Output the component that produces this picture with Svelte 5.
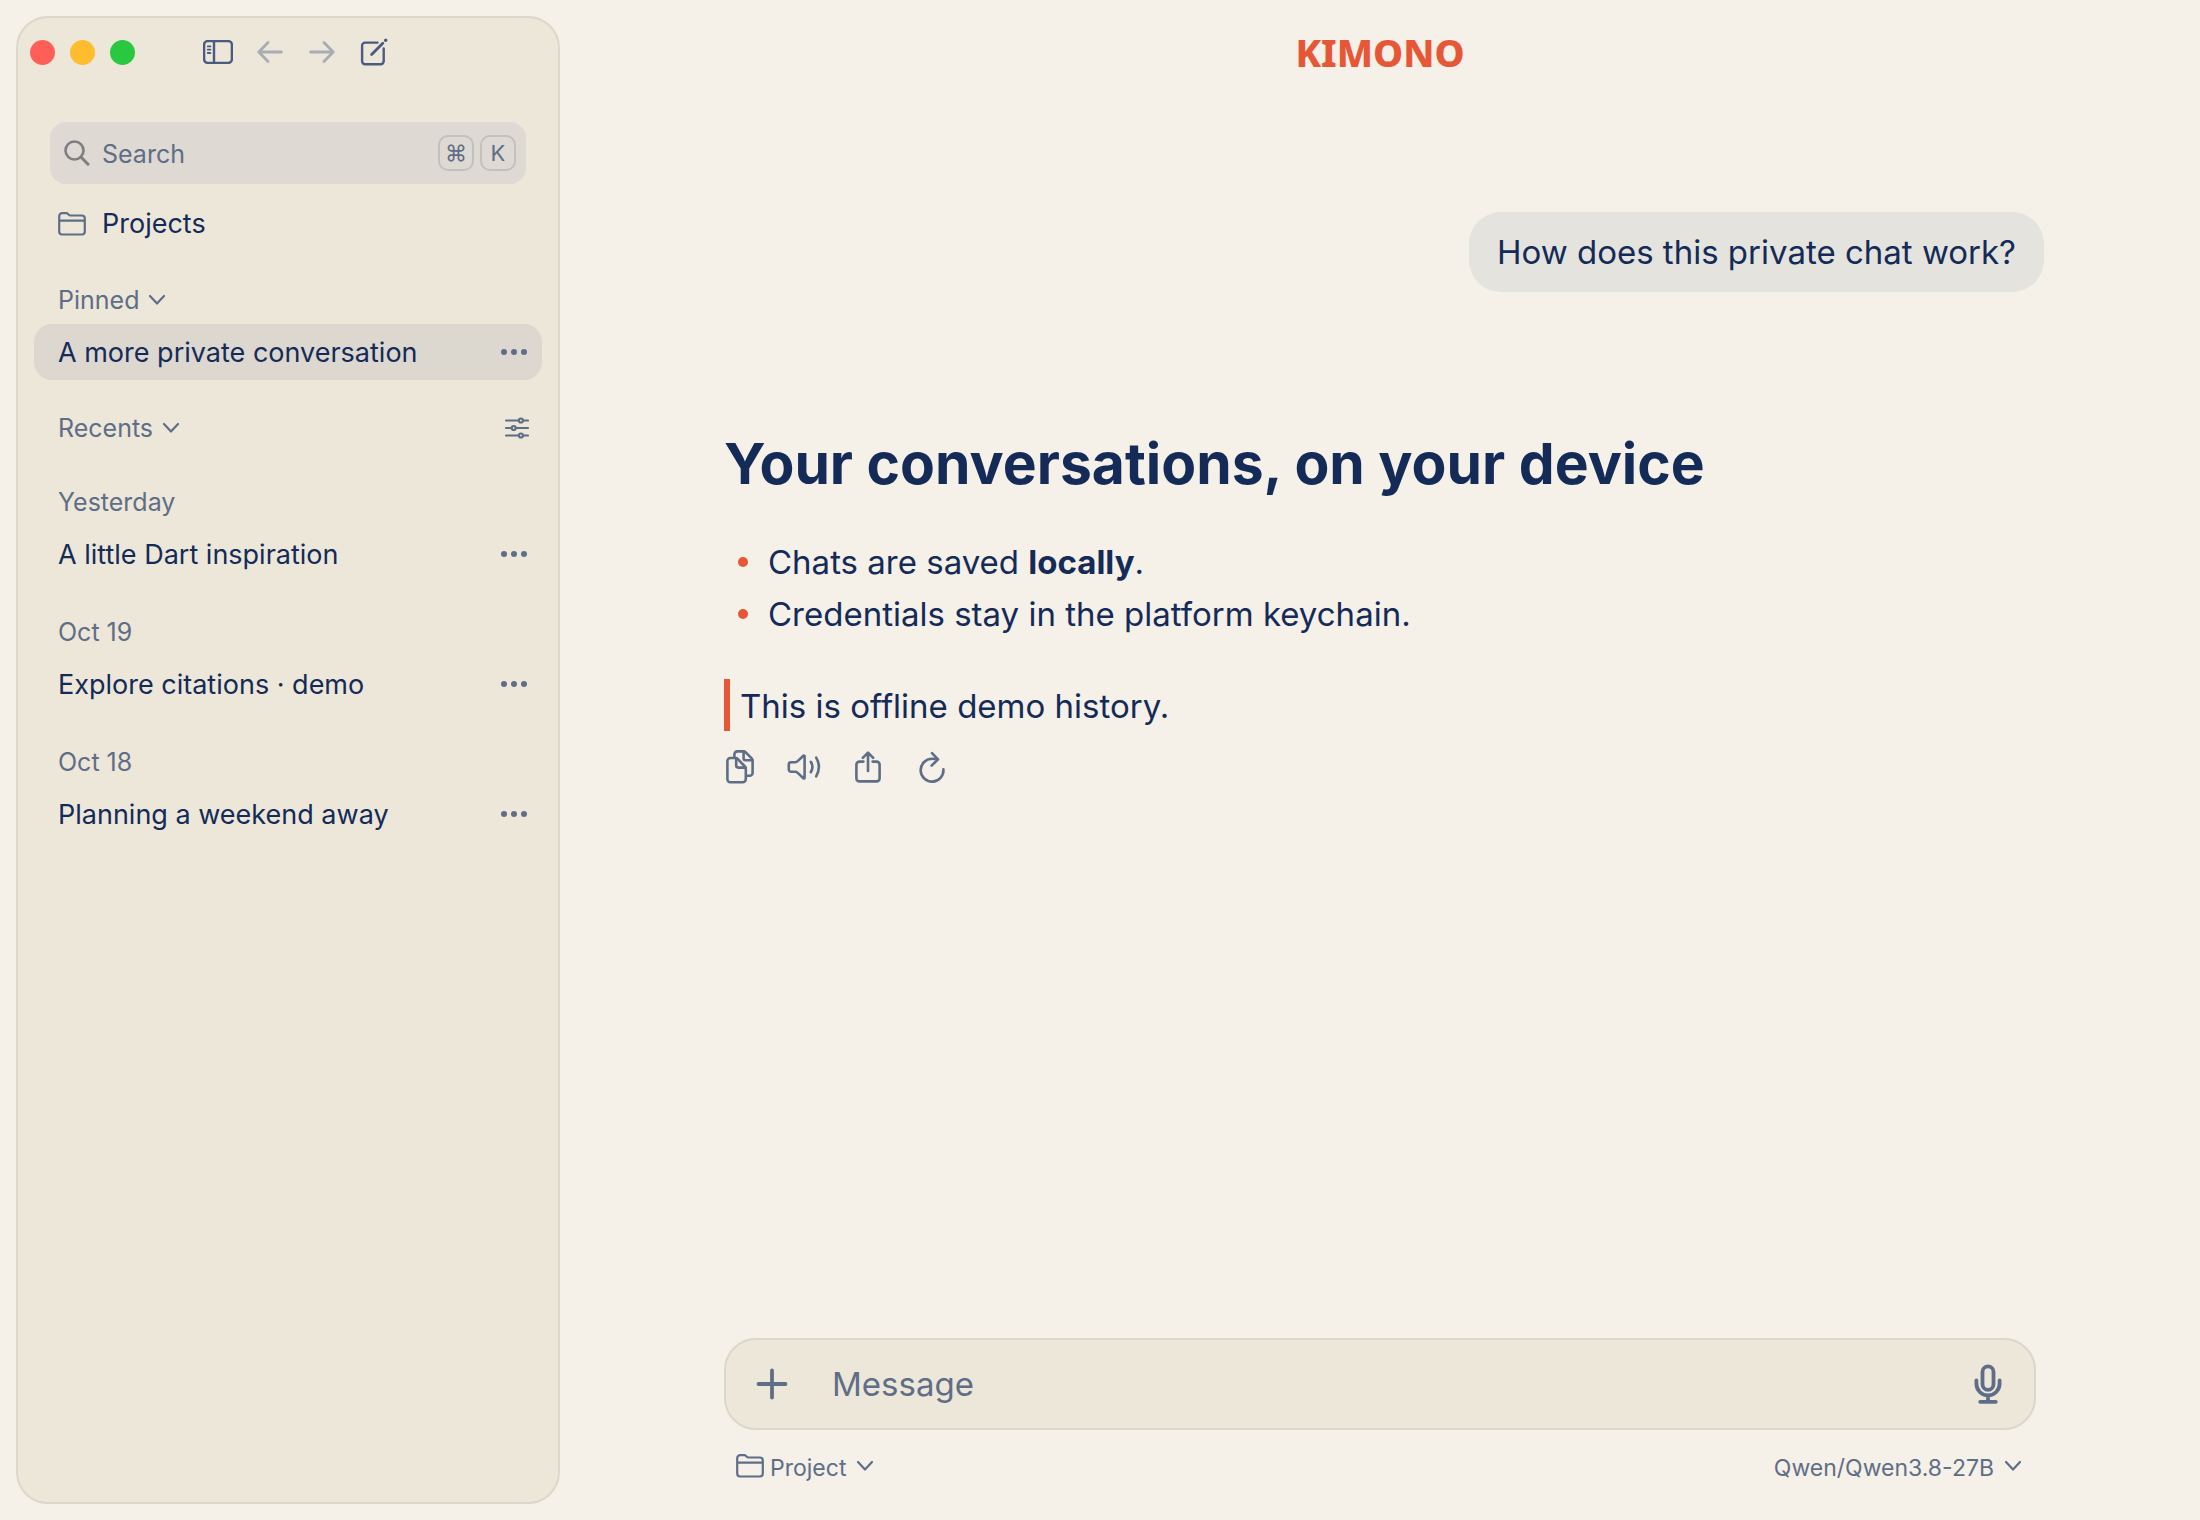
<script lang="ts">
    interface Chat {
        title: string;
        date?: string;
    }

    const pinned: Chat[] = [{ title: 'A more private conversation' }];

    const recents: Chat[] = [
        { date: 'Yesterday', title: 'A little Dart inspiration' },
        { date: 'Oct 19', title: 'Explore citations · demo' },
        { date: 'Oct 18', title: 'Planning a weekend away' }
    ];

    let selected = $state('A more private conversation');
    let pinnedOpen = $state(true);
    let recentsOpen = $state(true);
    let query = $state('');
    let message = $state('');
</script>

{#snippet chevron()}
    <svg class="chevron" width="18" height="12" viewBox="0 0 18 12" aria-hidden="true">
        <path d="M2 2l7 7.5L16 2" />
    </svg>
{/snippet}

{#snippet folder()}
    <svg width="28" height="24" viewBox="0 0 28 24" aria-hidden="true">
        <path d="M1.2 19.5V4.2a3 3 0 0 1 3-3h4.2c1.6 0 2.2 2.3 4 2.3h11.4a3 3 0 0 1 3 3v13a3 3 0 0 1-3 3H4.2a3 3 0 0 1-3-3zM1.2 8.6h25.6" />
    </svg>
{/snippet}

{#snippet chatRow(chat: Chat)}
    <div class="row" class:selected={chat.title === selected}>
        <button class="title" onclick={() => (selected = chat.title)}>{chat.title}</button>
        <button class="more" aria-label="More options for {chat.title}">
            <svg width="28" height="8" viewBox="0 0 28 8" aria-hidden="true">
                <circle cx="4" cy="4" r="3" />
                <circle cx="14" cy="4" r="3" />
                <circle cx="24" cy="4" r="3" />
            </svg>
        </button>
    </div>
{/snippet}

<div class="app">
    <aside class="sidebar">
        <div class="toolbar">
            <div class="lights">
                <button class="light red" aria-label="Close"></button>
                <button class="light yellow" aria-label="Minimize"></button>
                <button class="light green" aria-label="Zoom"></button>
            </div>
            <nav class="tools" aria-label="Window">
                <button class="tool" aria-label="Toggle sidebar">
                    <svg width="30" height="24" viewBox="0 0 30 24" aria-hidden="true">
                        <rect x="1.1" y="1.1" width="27.8" height="21.8" rx="3.6" />
                        <path d="M11 1v22" />
                        <path d="M4.8 6.4h2.6M4.8 9.7h2.6M4.8 13h2.6" stroke-width="1.8" />
                    </svg>
                </button>
                <button class="tool" aria-label="Back" disabled>
                    <svg width="26" height="22" viewBox="0 0 26 22" aria-hidden="true">
                        <path d="M11 1.6L1.8 11l9.2 9.4M1.8 11h22.6" />
                    </svg>
                </button>
                <button class="tool" aria-label="Forward" disabled>
                    <svg width="26" height="22" viewBox="0 0 26 22" aria-hidden="true">
                        <path d="M15 1.6l9.2 9.4-9.2 9.4M24.2 11H1.6" />
                    </svg>
                </button>
                <button class="tool" aria-label="New chat">
                    <svg width="28" height="28" viewBox="0 0 28 28" aria-hidden="true">
                        <path d="M17.5 4.6H5.1a3 3 0 0 0-3 3v15.7a3 3 0 0 0 3 3h15.6a3 3 0 0 0 3-3V10.4" />
                        <path d="M11.6 16.4L22.8 5.2" stroke-width="2.8" />
                        <path d="M25.6 2.4l.2-.2" stroke-width="3.2" />
                    </svg>
                </button>
            </nav>
        </div>

        <label class="search">
            <svg width="26" height="26" viewBox="0 0 26 26" aria-hidden="true">
                <circle cx="10.5" cy="10.5" r="9" />
                <path d="M17.2 17.2l6.8 7" stroke-width="3" />
            </svg>
            <input type="text" placeholder="Search" aria-label="Search" bind:value={query} />
            <kbd>⌘</kbd>
            <kbd>K</kbd>
        </label>

        <a class="projects" href="#projects">
            {@render folder()}
            Projects
        </a>

        <section class="group">
            <div class="group-head">
                <button onclick={() => (pinnedOpen = !pinnedOpen)}>Pinned {@render chevron()}</button>
            </div>
            {#if pinnedOpen}
                {#each pinned as chat (chat.title)}
                    {@render chatRow(chat)}
                {/each}
            {/if}
        </section>

        <section class="group">
            <div class="group-head">
                <button onclick={() => (recentsOpen = !recentsOpen)}>Recents {@render chevron()}</button>
                <button class="filter" aria-label="Filter recents">
                    <svg width="24" height="22" viewBox="0 0 24 22" aria-hidden="true">
                        <path d="M1 3.5h12.6M18.2 3.5H23M1 11h5.4M11 11h12M1 18.5h12.6M18.2 18.5H23" />
                        <circle cx="15.9" cy="3.5" r="2" />
                        <circle cx="8.7" cy="11" r="2" />
                        <circle cx="15.9" cy="18.5" r="2" />
                    </svg>
                </button>
            </div>
            {#if recentsOpen}
                {#each recents as chat (chat.title)}
                    <div class="day">
                        <h2>{chat.date}</h2>
                        {@render chatRow(chat)}
                    </div>
                {/each}
            {/if}
        </section>
    </aside>

    <main>
        <header>KIMONO</header>

        <div class="thread">
            <p class="bubble">How does this private chat work?</p>

            <article class="answer">
                <h1>Your conversations, on your device</h1>
                <ul>
                    <li>Chats are saved <strong>locally</strong>.</li>
                    <li>Credentials stay in the platform keychain.</li>
                </ul>
                <blockquote>This is offline demo history.</blockquote>
            </article>

            <div class="actions">
                <button aria-label="Copy">
                    <svg width="28" height="34" viewBox="0 0 28 34" aria-hidden="true">
                        <path d="M8.4 7.6V4.4a3 3 0 0 1 3-3h6.2c.8 0 1.5.3 2.1.9l6 6.1c.6.6.9 1.3.9 2.1v12.3a3 3 0 0 1-3 3h-2.2" />
                        <path d="M17.6 1.8v6.4a2 2 0 0 0 2 2h6.6" />
                        <path d="M4.4 8h5.2c.8 0 1.5.3 2.1.9l7.2 7.6c.6.6.9 1.3.9 2.1v10.6a3 3 0 0 1-3 3H4.4a3 3 0 0 1-3-3V11a3 3 0 0 1 3-3z" />
                        <path d="M10.2 8.4v7.2a2 2 0 0 0 2 2h7.2" />
                    </svg>
                </button>
                <button aria-label="Read aloud">
                    <svg width="34" height="28" viewBox="0 0 34 28" aria-hidden="true">
                        <path d="M4 9.2h4.4a3 3 0 0 0 2-.8l6-5.7c.5-.5 1.2-.1 1.2.6v21.4c0 .7-.7 1.1-1.2.6l-6-5.7a3 3 0 0 0-2-.8H4a2.2 2.2 0 0 1-2.2-2.2v-5.2A2.2 2.2 0 0 1 4 9.2z" />
                        <path d="M23.8 8.8a9.8 9.8 0 0 1 0 10.4M29.2 4.6a19 19 0 0 1 0 18.8" />
                    </svg>
                </button>
                <button aria-label="Share">
                    <svg width="26" height="32" viewBox="0 0 26 32" aria-hidden="true">
                        <path d="M8.4 10.6H4.4a3 3 0 0 0-3 3v13.8a3 3 0 0 0 3 3h17.2a3 3 0 0 0 3-3V13.6a3 3 0 0 0-3-3h-4" />
                        <path d="M13 20V2M7.8 6.8L13 1.6l5.2 5.2" />
                    </svg>
                </button>
                <button aria-label="Regenerate">
                    <svg width="28" height="32" viewBox="0 0 28 32" aria-hidden="true">
                        <path d="M25.4 18.4A11.4 11.4 0 1 1 14 7.8c2 0 3.8.2 5.6.6" />
                        <path d="M14 2.2l6 6.2-6.4 6.2" />
                    </svg>
                </button>
            </div>
        </div>

        <form class="composer" onsubmit={(e) => e.preventDefault()}>
            <div class="field">
                <button type="button" aria-label="Add attachment">
                    <svg class="bold" width="32" height="32" viewBox="0 0 32 32" aria-hidden="true">
                        <path d="M16 2.5v27M2.5 16h27" />
                    </svg>
                </button>
                <input type="text" placeholder="Message" aria-label="Message" bind:value={message} />
                <button type="button" aria-label="Dictate">
                    <svg class="bold" width="28" height="40" viewBox="0 0 28 40" aria-hidden="true">
                        <rect x="8.5" y="2.4" width="11" height="23.4" rx="5.5" />
                        <path d="M2.4 16.5v3.3a11.6 11.6 0 0 0 23.2 0v-3.3M14 31.6v5.8M6.2 37.8h15.6" />
                    </svg>
                </button>
            </div>
            <div class="options">
                <button type="button">{@render folder()} Project {@render chevron()}</button>
                <button type="button">Qwen/Qwen3.8-27B {@render chevron()}</button>
            </div>
        </form>
    </main>
</div>

<style>
    :global(body) {
        margin: 0;
        background: #f5f0e8;
    }

    .app {
        --navy: #142b58;
        --slate: #5f6e87;
        --coral: #e65737;
        --sand: #ede7d9;
        --line: #dad7cc;
        display: flex;
        min-height: 100vh;
        box-sizing: border-box;
        padding: 16px 0 16px 16px;
        background: #f5f0e8;
        color: var(--navy);
        font-family: Inter, "Liberation Sans", sans-serif;
        font-size: 33px;
    }

    button,
    input {
        margin: 0;
        padding: 0;
        border: 0;
        background: none;
        color: inherit;
        font: inherit;
    }

    button {
        display: flex;
        align-items: center;
        cursor: pointer;
    }

    input {
        flex: 1;
        min-width: 0;
        outline: none;
    }

    input::placeholder {
        color: var(--slate);
        opacity: 1;
    }

    svg {
        display: block;
        flex: none;
        fill: none;
        stroke: var(--slate);
        stroke-width: 2.2;
        stroke-linecap: round;
        stroke-linejoin: round;
    }

    svg.bold {
        stroke-width: 3.8;
    }

    /* Sidebar */
    .sidebar {
        flex: none;
        width: 544px;
        box-sizing: border-box;
        border: 2px solid var(--line);
        border-radius: 32px;
        background: var(--sand);
        font-size: 27px;
    }

    .toolbar {
        display: flex;
        align-items: center;
        gap: 65px;
        height: 68px;
        padding-left: 12px;
    }

    .lights {
        display: flex;
        gap: 15px;
    }

    .light {
        width: 25px;
        height: 25px;
        border-radius: 50%;
    }

    .red {
        background: #ff5f57;
    }

    .yellow {
        background: #febc2e;
    }

    .green {
        background: #28c840;
    }

    .tools {
        display: flex;
        gap: 16px;
    }

    .tool {
        justify-content: center;
        width: 36px;
        height: 36px;
    }

    .tool svg {
        stroke: #4a5a80;
        stroke-width: 2.4;
    }

    .tool:disabled svg {
        stroke: #a9acb4;
        stroke-width: 2.8;
    }

    .search {
        display: flex;
        align-items: center;
        gap: 6px;
        height: 62px;
        margin: 36px 32px 0;
        padding: 0 10px 0 14px;
        border-radius: 16px;
        background: #ded9d2;
        font-size: 25px;
    }

    .search svg {
        stroke: #7f7e80;
        stroke-width: 2.6;
    }

    .search input {
        padding: 2px 0 0 6px;
    }

    kbd {
        width: 36px;
        box-sizing: border-box;
        border: 2px solid #c2c1c0;
        border-radius: 10px;
        color: var(--slate);
        font-family: Inter, "DejaVu Sans", sans-serif;
        font-size: 22px;
        line-height: 32px;
        text-align: center;
    }

    .projects {
        display: flex;
        align-items: center;
        gap: 16px;
        margin: 18px 40px 0;
        color: var(--navy);
        line-height: 44px;
        text-decoration: none;
    }

    .group {
        margin: 0 16px 32px;
    }

    .projects + .group {
        margin-top: 38px;
    }

    .group-head {
        display: flex;
        align-items: center;
        justify-content: space-between;
        padding: 0 13px 8px 24px;
        color: var(--slate);
        font-size: 25px;
        line-height: 32px;
    }

    .group-head button {
        gap: 9px;
    }

    .row {
        display: flex;
        align-items: center;
        height: 56px;
        padding: 0 14px 0 24px;
        border-radius: 18px;
    }

    .row.selected {
        background: #dcd7cf;
    }

    .title {
        flex: 1;
        height: 100%;
        white-space: nowrap;
    }

    .more svg {
        fill: var(--slate);
        stroke: none;
    }

    .day {
        margin-top: 34px;
    }

    .day h2 {
        margin: 0 24px;
        padding-bottom: 8px;
        color: var(--slate);
        font-size: 25px;
        font-weight: 400;
        line-height: 32px;
    }

    /* Chat */
    main {
        flex: 1;
        display: flex;
        flex-direction: column;
        min-width: 0;
        padding: 0 164px;
    }

    header {
        color: var(--coral);
        font-family: "Noto Sans Condensed", "Noto Sans", "Open Sans", sans-serif;
        font-size: 38px;
        font-weight: 800;
        line-height: 72px;
        text-align: center;
    }

    .thread {
        flex: 1;
        margin: 124px -8px 0 0;
    }

    .bubble {
        width: fit-content;
        margin: 0 0 136px auto;
        padding: 16px 28px;
        border-radius: 32px;
        background: #e4e3dd;
        line-height: 48px;
    }

    h1 {
        margin: 0 0 36px;
        font-size: 57px;
        font-weight: 700;
        line-height: 72px;
    }

    ul {
        margin: 0 0 39px;
        padding: 0;
        list-style: none;
    }

    li {
        display: flex;
        align-items: center;
        line-height: 52px;
        white-space: pre;
    }

    li::before {
        content: '';
        width: 10px;
        height: 10px;
        margin: 0 20px 0 14px;
        border-radius: 50%;
        background: var(--coral);
    }

    blockquote {
        margin: 0;
        padding: 2px 0 0 10px;
        border-left: 6px solid var(--coral);
        line-height: 50px;
    }

    .actions {
        display: flex;
        gap: 32px;
        margin-top: 18px;
    }

    .actions button {
        justify-content: center;
        width: 32px;
        height: 36px;
    }

    .actions svg {
        stroke-width: 2.6;
    }

    /* Composer */
    .field {
        display: flex;
        align-items: center;
        height: 92px;
        box-sizing: border-box;
        padding: 0 32px 0 30px;
        border: 2px solid var(--line);
        border-radius: 32px;
        background: var(--sand);
    }

    .field input {
        margin: 0 44px;
    }

    .options {
        display: flex;
        justify-content: space-between;
        padding: 20px 14px 18px 12px;
        color: var(--slate);
        font-size: 23px;
        line-height: 36px;
    }

    .options button {
        gap: 6px;
    }

    .options svg {
        margin-bottom: 4px;
    }

    .options .chevron {
        margin-left: 4px;
    }
</style>
